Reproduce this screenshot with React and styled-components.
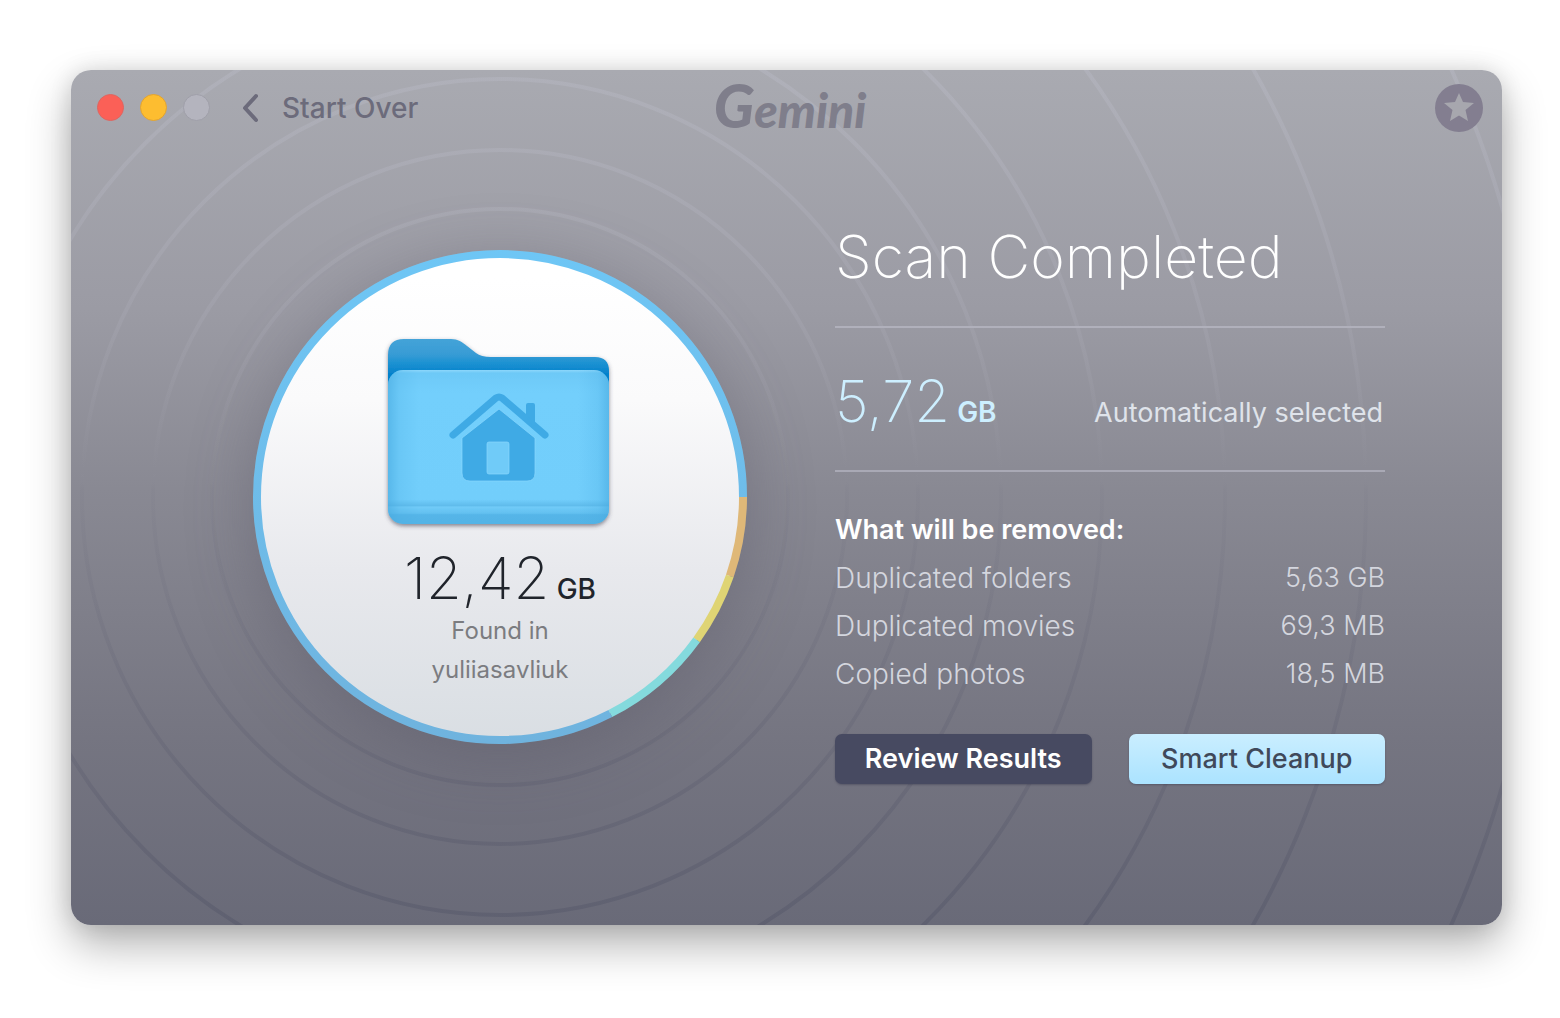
import React from 'react';
import styled, { createGlobalStyle } from 'styled-components';

const GlobalStyle = createGlobalStyle`
  * {
    box-sizing: border-box;
  }

  body {
    margin: 0;
    background: #fff;
    font-family: Inter, 'Liberation Sans', sans-serif;
  }
`;

const removedItems = [
  { id: 1, title: 'Duplicated folders', size: '5,63 GB' },
  { id: 2, title: 'Duplicated movies', size: '69,3 MB' },
  { id: 3, title: 'Copied photos', size: '18,5 MB' },
];

// angles in degrees, clockwise from three o'clock
const segments = [
  { id: 'music', from: 0, to: 19, color: '#dfb878' },
  { id: 'documents', from: 19, to: 36, color: '#dfd474' },
  { id: 'photos', from: 36, to: 63, color: '#84dadd' },
  { id: 'folders', from: 63, to: 360, color: 'url(#ringBlue)' },
];

const rippleRadii = [288, 347, 418, 501, 602, 725, 866, 1043];

const Desktop = styled.div`
  padding: 70px 58px 93px 71px;
`;

const Window = styled.main`
  position: relative;
  overflow: hidden;
  padding-bottom: 141px;
  border-radius: 20px;
  background: linear-gradient(#a9aab1 0%, #9b9ba4 28%, #898993 49%, #757581 78%, #696a78 100%);
`;

const Shadow = styled.div`
  border-radius: 20px;
  box-shadow: 0 20px 44px rgba(0, 0, 0, 0.3), 0 0 22px rgba(0, 0, 0, 0.12);
`;

const Header = styled.header`
  position: relative;
  z-index: 1;
  display: grid;
  grid-template-columns: 1fr auto 1fr;
  align-items: center;
  height: 75px;
  padding: 0 19px 0 26px;
`;

const HeaderLeft = styled.div`
  display: flex;
  align-items: center;
`;

const Lights = styled.div`
  display: flex;
  align-items: center;
  gap: 16px;
`;

const Light = styled.button`
  width: 27px;
  height: 27px;
  padding: 0;
  border: 1px solid ${(props) => props.$edge};
  border-radius: 50%;
  background: ${(props) => props.$color};
`;

const BackButton = styled.button`
  display: flex;
  align-items: center;
  gap: 23px;
  margin-left: 32px;
  padding: 0;
  border: 0;
  background: none;
  color: #6c6b7b;
  font: 500 28px/32px Inter, sans-serif;
`;

const Logo = styled.div`
  color: #7f7e8b;
  font: italic 900 48px/60px Lato, sans-serif;

  &::first-letter {
    font-size: 60px;
  }
`;

const RateButton = styled.button`
  justify-self: end;
  display: grid;
  place-items: center;
  width: 48px;
  height: 48px;
  padding: 0;
  border: 0;
  border-radius: 50%;
  background: #837e90;
  color: #a7a7ae;
`;

const Content = styled.div`
  display: flex;
  align-items: flex-start;
  gap: 88px;
  padding: 0 117px 0 182px;
`;

const Dial = styled.section`
  position: relative;
  flex: none;
  display: flex;
  flex-direction: column;
  align-items: center;
  width: 494px;
  height: 494px;
  margin-top: 105px;
  padding-top: 80px;
  border: 4px solid transparent;
  border-radius: 50%;
  background: linear-gradient(#fff 5%, #fafafb 30%, #e8e9ed 65%, #d9dee3 100%) padding-box;
  box-shadow: 0 12px 64px rgba(84, 82, 98, 0.38);
`;

const Ripples = styled.svg`
  position: absolute;
  top: 50%;
  left: 50%;
  width: 2100px;
  height: 2100px;
  transform: translate(-50%, -50%);
  pointer-events: none;
`;

const FolderArt = styled.svg`
  position: relative;
  flex: none;
`;

const Figure = styled.p`
  position: relative;
  margin: 0;
  color: ${(props) => props.color};
  font-size: 58px;
  font-weight: 200;
  line-height: 60px;
  white-space: nowrap;
`;

const Unit = styled.span`
  font-size: 28px;
  font-weight: ${(props) => props.$weight};
  line-height: 0;
`;

const Found = styled.div`
  padding-top: 14px;
`;

const FoundIn = styled.p`
  position: relative;
  margin: 3px 0 0;
  color: #7b7c80;
  font-size: 24px;
  line-height: 39px;
  text-align: center;
`;

const Panel = styled.section`
  position: relative;
  flex: 1;
  min-width: 0;
  padding-top: 76px;
`;

const Title = styled.h1`
  margin: 0;
  color: #fff;
  font-size: 59px;
  font-weight: 200;
  line-height: 72px;
  white-space: nowrap;
`;

const Selected = styled.div`
  display: flex;
  align-items: baseline;
  justify-content: space-between;
  margin-top: 33px;
  padding: 43px 2px 39px 0;
  border-top: 2px solid #b0b0bb;
  border-bottom: 2px solid #a9a9b5;
`;

const SelectedLabel = styled.span`
  color: #dfe3ea;
  font-size: 27px;
  white-space: nowrap;
`;

const Removed = styled.table`
  width: 100%;
  margin-top: 34px;
  border-collapse: collapse;
  color: #d4d6de;
  font-size: 27px;
  font-weight: 300;
  line-height: 48px;

  caption {
    color: #fff;
    font-weight: 600;
    text-align: left;
  }

  th,
  td {
    padding: 0;
    font-weight: 300;
    text-align: left;
  }

  th {
    font-size: 28px;
  }

  td {
    text-align: right;
  }
`;

const Actions = styled.div`
  display: grid;
  grid-template-columns: 1fr 1fr;
  gap: 37px;
  margin-top: 36px;
`;

const ActionButton = styled.button`
  height: 50px;
  padding: 0;
  border: 0;
  border-radius: 7px;
  background: ${(props) => (props.$primary ? 'linear-gradient(#caeeff, #abe3ff)' : '#474a61')};
  box-shadow: 0 1px 2px rgba(50, 50, 70, 0.4);
  color: ${(props) => (props.$primary ? '#40495a' : '#fff')};
  font: ${(props) => (props.$primary ? 500 : 600)} 27px/32px Inter, sans-serif;
  white-space: nowrap;
`;

const DialRings = () => (
  <Ripples viewBox="-1050 -1050 2100 2100" fill="none" aria-hidden="true">
    <defs>
      <linearGradient id="ripple" gradientUnits="userSpaceOnUse" x1="0" y1="-428" x2="0" y2="428">
        <stop offset="0" stopColor="#b6b7c2" stopOpacity="0.5" />
        <stop offset="0.3" stopColor="#b0b0bc" stopOpacity="0.22" />
        <stop offset="0.47" stopColor="#b0b0bc" stopOpacity="0" />
        <stop offset="0.49" stopColor="#6b6b7c" stopOpacity="0.06" />
        <stop offset="0.8" stopColor="#5b5c6e" stopOpacity="0.3" />
        <stop offset="1" stopColor="#555769" stopOpacity="0.5" />
      </linearGradient>
      <linearGradient id="ringBlue" gradientUnits="userSpaceOnUse" x1="0" y1="-247" x2="0" y2="247">
        <stop offset="0" stopColor="#6ec6f5" />
        <stop offset="1" stopColor="#6fb3de" />
      </linearGradient>
    </defs>
    {rippleRadii.map((radius) => (
      <circle key={radius} r={radius} stroke="url(#ripple)" strokeWidth="4" />
    ))}
    {segments.map((item) => (
      <circle
        key={item.id}
        r="243"
        pathLength="360"
        stroke={item.color}
        strokeWidth="8"
        strokeDasharray={`${item.to - item.from} 360`}
        strokeDashoffset={-item.from}
      />
    ))}
  </Ripples>
);

const HomeFolder = () => (
  <FolderArt width="234" height="200" viewBox="-6 -5 234 200" aria-hidden="true">
    <defs>
      <linearGradient id="folderBack" x1="0" y1="0" x2="0" y2="1">
        <stop offset="0" stopColor="#44a3d8" />
        <stop offset="0.25" stopColor="#389cd5" />
        <stop offset="0.4" stopColor="#1d92d2" />
        <stop offset="0.6" stopColor="#0380cb" />
      </linearGradient>
      <linearGradient id="folderFront" x1="0" y1="0" x2="0" y2="1">
        <stop offset="0" stopColor="#8dd7fb" />
        <stop offset="0.02" stopColor="#6dc9f7" />
        <stop offset="0.15" stopColor="#73cffc" />
        <stop offset="0.84" stopColor="#72cefb" />
        <stop offset="0.88" stopColor="#60bcec" />
        <stop offset="0.89" stopColor="#70cbf8" />
        <stop offset="0.93" stopColor="#63c0f0" />
        <stop offset="0.94" stopColor="#55b5e8" />
        <stop offset="1" stopColor="#52b3e6" />
      </linearGradient>
      <linearGradient id="folderSides">
        <stop offset="0" stopColor="#46a9df" stopOpacity="0.6" />
        <stop offset="0.05" stopColor="#46a9df" stopOpacity="0.2" />
        <stop offset="0.14" stopColor="#46a9df" stopOpacity="0" />
        <stop offset="0.86" stopColor="#46a9df" stopOpacity="0" />
        <stop offset="0.95" stopColor="#46a9df" stopOpacity="0.2" />
        <stop offset="1" stopColor="#46a9df" stopOpacity="0.6" />
      </linearGradient>
      <filter id="folderShadow" x="-10%" y="-10%" width="120%" height="120%">
        <feDropShadow dx="0" dy="2" stdDeviation="2" floodColor="#3a3a50" floodOpacity="0.6" />
      </filter>
    </defs>
    <g filter="url(#folderShadow)">
      <path
        fill="url(#folderBack)"
        d="M-1 60V16Q-1 0 15 0H62C69 0 73 3 78 7L87 14Q92 18 102 18H206Q220 18 220 32V60Z"
      />
      <rect x="-1" y="31" width="221" height="154" rx="15" fill="url(#folderFront)" />
    </g>
    <rect x="-1" y="31" width="221" height="154" rx="15" fill="url(#folderSides)" />
    <g fill="#3faae5" stroke="#8ad7fd" strokeOpacity="0.7" strokeWidth="1">
      <path d="M110 70L146 99V134Q146 142 138 142H81Q73 142 73 134V99Z" />
      <rect x="98" y="103" width="22" height="32" rx="2" fill="#70cbf8" />
    </g>
    <g fill="none" stroke="#3faae5" strokeLinecap="round" strokeLinejoin="round">
      <path strokeWidth="7" d="M64 96L107 59Q110 57 113 59L156 96" />
      <path fill="#3faae5" strokeWidth="2" d="M138 78V66Q138 65 139 65H144Q145 65 145 66V86Z" />
    </g>
  </FolderArt>
);

const App = () => (
  <>
    <GlobalStyle />
    <Desktop>
      <Shadow>
        <Window>
          <Header>
            <HeaderLeft>
              <Lights>
                <Light aria-label="Close" $color="#fb6057" $edge="#de6560" />
                <Light aria-label="Minimize" $color="#fdbd30" $edge="#e2a431" />
                <Light aria-label="Zoom" disabled $color="#b4b4be" $edge="#9f9fa9" />
              </Lights>
              <BackButton>
                <svg width="17" height="30" viewBox="0 0 17 30" fill="none" aria-hidden="true">
                  <path
                    d="M14 3L3 15L14 27"
                    stroke="currentColor"
                    strokeWidth="4"
                    strokeLinecap="round"
                    strokeLinejoin="round"
                  />
                </svg>
                Start Over
              </BackButton>
            </HeaderLeft>
            <Logo>Gemini</Logo>
            <RateButton aria-label="Rate Gemini">
              <svg width="30" height="30" viewBox="0 0 30 30" fill="currentColor" aria-hidden="true">
                <path d="M15 0L19 9L30 10L21.500 17L24 28L15 22.500L6 28L8.500 17L0 10L11 9Z" />
              </svg>
            </RateButton>
          </Header>
          <Content>
            <Dial>
              <DialRings />
              <HomeFolder />
              <Found>
                <Figure color="#20242b">
                  12,42<Unit $weight={500}> GB</Unit>
                </Figure>
                <FoundIn>
                  Found in
                  <br />
                  yuliiasavliuk
                </FoundIn>
              </Found>
            </Dial>
            <Panel>
              <Title>Scan Completed</Title>
              <Selected>
                <Figure color="#cdefff">
                  5,72<Unit $weight={600}> GB</Unit>
                </Figure>
                <SelectedLabel>Automatically selected</SelectedLabel>
              </Selected>
              <Removed>
                <caption>What will be removed:</caption>
                <tbody>
                  {removedItems.map((item) => (
                    <tr key={item.id}>
                      <th scope="row">{item.title}</th>
                      <td>{item.size}</td>
                    </tr>
                  ))}
                </tbody>
              </Removed>
              <Actions>
                <ActionButton>Review Results</ActionButton>
                <ActionButton $primary>Smart Cleanup</ActionButton>
              </Actions>
            </Panel>
          </Content>
        </Window>
      </Shadow>
    </Desktop>
  </>
);

export default App;
